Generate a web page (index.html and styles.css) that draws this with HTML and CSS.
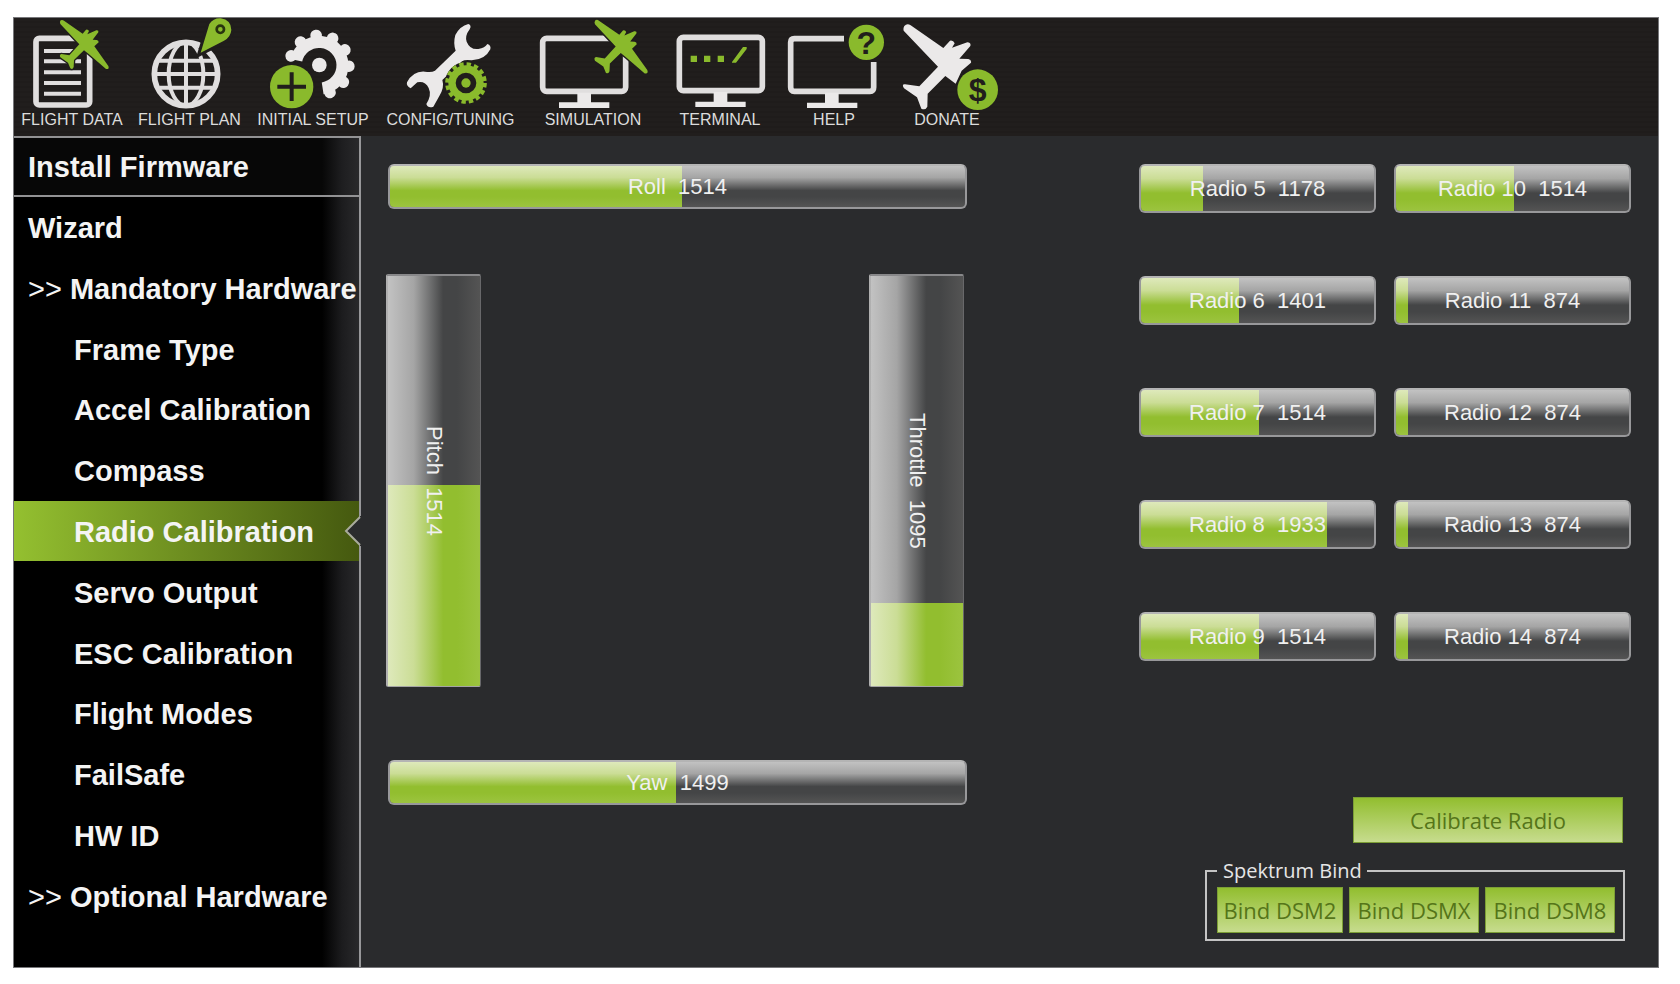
FILE: index.html
```html
<!DOCTYPE html>
<html lang="en">
<head>
<meta charset="utf-8">
<title>Radio Calibration</title>
<link rel="stylesheet" href="styles.css">
</head>
<body>
<svg class="defs" aria-hidden="true">
  <defs>
    <path id="plane" d="M0 0Q5-3 10 1L66 40 76 28Q82 26 85 32L80 42 107 30Q115 29 113 36L96 58 108 59Q114 60 114 66L101 78 143 137Q147 148 136 146L85 102 70 90 40 119 39 140Q36 149 29 144L22 127-1 111Q-5 103 2 101L26 105 56 72 -1 11Q-4 5 0 0Z"/>
  </defs>
</svg>
<div class="app">
  <header class="toolbar">
    <button class="tool tool-data" type="button">
      <svg viewBox="42 54 348 276" aria-hidden="true">
        <rect class="line" x="108" y="115" width="161" height="200" rx="10"/>
        <path class="line thin" d="M132 153H243M132 184H243M132 217H243M132 249H243M132 281H243"/>
        <use class="green trim" href="#plane" x="182" y="61"/>
        <use class="green" href="#plane" x="182" y="61"/>
      </svg>
      <span>FLIGHT DATA</span>
    </button>
    <button class="tool tool-plan" type="button">
      <svg viewBox="390 54 357 276" aria-hidden="true">
        <circle class="line" cx="558" cy="222" r="95"/>
        <g class="line thin"><path d="M558 125V319M462 222H654M477 182H640M480 263H636"/><ellipse cx="558" cy="222" rx="52" ry="95"/></g>
        <path class="green halo" d="M602 158L628 72Q640 54 662 55 694 60 694 90 692 112 672 122Z"/>
        <path class="green" d="M602 158L628 72Q640 54 662 55 694 60 694 90 692 112 672 122Z"/>
        <circle class="hole" cx="661" cy="88" r="11"/>
      </svg>
      <span>FLIGHT PLAN</span>
    </button>
    <button class="tool tool-setup" type="button">
      <svg viewBox="747 54 384 276" aria-hidden="true">
        <path class="gear" d="M889 181A70 70 0 1 1 968 265"/>
        <path class="teeth" d="M873 168A89 89 0 1 1 968 283"/>
        <circle class="white" cx="958" cy="195" r="22"/>
        <circle class="green halo" cx="875" cy="260" r="62"/>
        <circle class="green" cx="875" cy="260" r="65"/>
        <path class="cut" d="M832 260H918M875 217V303"/>
      </svg>
      <span>INITIAL SETUP</span>
    </button>
    <button class="tool tool-config" type="button">
      <svg viewBox="21 54 441 276" aria-hidden="true">
        <path class="white" d="M295 72Q306 76 299 88 284 108 290 125 300 150 325 147 345 144 352 132 364 136 361 148 345 180 305 181 285 178 276 184L217 240Q224 262 208 288L190 320Q174 326 169 312 186 285 176 264 165 242 142 247L122 265Q108 258 111 247 130 212 165 215 185 218 195 212L257 152Q249 130 256 105 270 78 295 72Z"/>
        <circle class="green halo" cx="288" cy="249" r="54"/>
        <circle class="small-gear" cx="288" cy="249" r="42"/>
        <circle class="small-teeth" cx="288" cy="249" r="56"/>
        <circle class="green" cx="288" cy="249" r="14"/>
      </svg>
      <span>CONFIG/TUNING</span>
    </button>
    <button class="tool tool-sim" type="button">
      <svg viewBox="462 54 414 276" aria-hidden="true">
        <rect class="line" x="518" y="115" width="249" height="159" rx="12"/>
        <path class="white" d="M622 278H663V307H718V324H567V307H622Z"/>
        <g transform="translate(676 61) scale(1.09)"><use class="green trim" href="#plane"/><use class="green" href="#plane"/></g>
      </svg>
      <span>SIMULATION</span>
    </button>
    <button class="tool tool-term" type="button">
      <svg viewBox="6 54 348 276" aria-hidden="true">
        <rect class="line" x="58" y="112" width="249" height="160" rx="12"/>
        <path class="white" d="M161 276H202V305H257V321H106V305H161Z"/>
        <path class="green" d="M92 167H111V186H92ZM132 167H151V186H132ZM173 167H192V186H173ZM216 186L249 141H260V147L228 188H216Z"/>
      </svg>
      <span>TERMINAL</span>
    </button>
    <button class="tool tool-help" type="button">
      <svg viewBox="354 54 336 276" aria-hidden="true">
        <path class="line" d="M552 116H403Q392 116 392 127V262Q392 274 403 274H630Q641 274 641 262V186"/>
        <path class="white" d="M495 278H536V308H592V324H441V308H495Z"/>
        <circle class="green" cx="619" cy="127" r="53"/>
        <text class="glyph" x="619" y="161">?</text>
      </svg>
      <span>HELP</span>
    </button>
    <button class="tool tool-donate" type="button">
      <svg viewBox="690 54 342 276" aria-hidden="true">
        <path class="white" d="M733 78Q741 69 752 76L850 144 870 122Q880 120 884 130L876 143 922 127Q934 128 931 138L898 176 925 177Q935 180 933 188L905 212 887 251 856 228 803 281 802 320Q796 332 784 326L771 292 732 265Q724 252 735 253L778 259 834 200 731 92Q729 84 733 78Z"/>
        <circle class="green halo" cx="953" cy="269" r="56"/>
        <circle class="green" cx="953" cy="269" r="61"/>
        <text class="glyph" x="953" y="303">$</text>
      </svg>
      <span>DONATE</span>
    </button>
  </header>
  <div class="body">
    <nav class="sidebar" aria-label="Setup">
      <a class="item first" href="#firmware">Install Firmware</a>
      <a class="item" href="#wizard">Wizard</a>
      <a class="item" href="#mandatory"><span class="marks">&gt;&gt;</span>Mandatory Hardware</a>
      <a class="item sub" href="#frame">Frame Type</a>
      <a class="item sub" href="#accel">Accel Calibration</a>
      <a class="item sub" href="#compass">Compass</a>
      <a class="item sub active" href="#radio" aria-current="page">Radio Calibration
        <svg class="notch" viewBox="0 0 18 30" aria-hidden="true"><path d="M18 0H16V1L2 15 16 29V30H18Z"/><polyline points="16,1 2,15 16,29"/></svg>
      </a>
      <a class="item sub" href="#servo">Servo Output</a>
      <a class="item sub" href="#esc">ESC Calibration</a>
      <a class="item sub" href="#modes">Flight Modes</a>
      <a class="item sub" href="#failsafe">FailSafe</a>
      <a class="item sub" href="#hwid">HW ID</a>
      <a class="item" href="#optional"><span class="marks">&gt;&gt;</span>Optional Hardware</a>
    </nav>
    <main class="content">
      <section class="sticks">
        <div class="bar wide"><div class="fill" style="width:50.8%"></div><span>Roll  1514</span></div>
        <div class="columns">
          <div class="bar tall"><div class="fill" style="height:49%"></div><span>Pitch  1514</span></div>
          <div class="bar tall"><div class="fill" style="height:20.2%"></div><span>Throttle  1095</span></div>
        </div>
        <div class="bar wide"><div class="fill" style="width:49.7%"></div><span>Yaw  1499</span></div>
      </section>
      <section class="side">
        <div class="radios">
          <div class="bar"><div class="fill" style="width:26.6%"></div><span>Radio 5  1178</span></div>
          <div class="bar"><div class="fill" style="width:42.1%"></div><span>Radio 6  1401</span></div>
          <div class="bar"><div class="fill" style="width:50.8%"></div><span>Radio 7  1514</span></div>
          <div class="bar"><div class="fill" style="width:80%"></div><span>Radio 8  1933</span></div>
          <div class="bar"><div class="fill" style="width:50.8%"></div><span>Radio 9  1514</span></div>
          <div class="bar"><div class="fill" style="width:50.8%"></div><span>Radio 10  1514</span></div>
          <div class="bar"><div class="fill" style="width:5%"></div><span>Radio 11  874</span></div>
          <div class="bar"><div class="fill" style="width:5%"></div><span>Radio 12  874</span></div>
          <div class="bar"><div class="fill" style="width:5%"></div><span>Radio 13  874</span></div>
          <div class="bar"><div class="fill" style="width:5%"></div><span>Radio 14  874</span></div>
        </div>
        <div class="actions">
          <button class="btn calibrate" type="button">Calibrate Radio</button>
          <fieldset class="bind">
            <legend>Spektrum Bind</legend>
            <div class="bind-row">
              <button class="btn" type="button">Bind DSM2</button>
              <button class="btn" type="button">Bind DSMX</button>
              <button class="btn" type="button">Bind DSM8</button>
            </div>
          </fieldset>
        </div>
      </section>
    </main>
  </div>
</div>
</body>
</html>
```
FILE: styles.css
```css
* { box-sizing: border-box; }

body {
  margin: 0;
  min-height: 100vh;
  display: flex;
  padding: 17px 21px 16px 13px;
  background: #fff;
  font-family: "Liberation Sans", Arial, sans-serif;
}

.defs { position: absolute; width: 0; height: 0; }

.app {
  flex: 1;
  display: flex;
  flex-direction: column;
  border: 1px solid #77777a;
  background: #2a2b2d;
}

/* Toolbar */
.toolbar {
  display: flex;
  padding-bottom: 6px;
  background: repeating-linear-gradient(#211e1d 0 3px, #1f1c1b 3px 5px);
}

.tool {
  display: flex;
  flex-direction: column;
  align-items: center;
  padding: 0;
  border: 0;
  background: none;
  color: #dcdcdc;
  font: 16px/20px "Liberation Sans", Arial, sans-serif;
  white-space: nowrap;
}
.tool svg { display: block; width: 100%; height: 92px; }
.tool-data, .tool-term { width: 116px; }
.tool-plan { width: 119px; }
.tool-setup { width: 128px; }
.tool-config { width: 147px; }
.tool-sim { width: 138px; }
.tool-help { width: 112px; }
.tool-donate { width: 114px; }

.line { fill: none; stroke: #e0dede; stroke-width: 17px; }
.thin { stroke-width: 12px; }
.white { fill: #ebe9e9; }
.green { fill: #8aba2c; }
.halo { stroke: #201d1c; stroke-width: 18px; }
.trim { stroke: #201d1c; stroke-width: 8px; }
.hole { fill: none; stroke: #28340f; stroke-width: 8px; }
.cut { fill: none; stroke: #211e1c; stroke-width: 12px; }
.gear { fill: none; stroke: #ebe9e9; stroke-width: 36px; }
.teeth { fill: none; stroke: #ebe9e9; stroke-width: 34px; stroke-linecap: round; stroke-dasharray: 1 50; }
.small-gear { fill: #211e1c; stroke: #8aba2c; stroke-width: 22px; }
.small-teeth { fill: none; stroke: #8aba2c; stroke-width: 13px; stroke-dasharray: 13 9; }
.glyph { fill: #211e1c; font: bold 96px "Liberation Sans", Arial, sans-serif; text-anchor: middle; }

/* Sidebar */
.body { flex: 1; display: flex; }

.sidebar {
  width: 347px;
  flex: none;
  display: grid;
  grid-auto-rows: 1fr;
  padding-bottom: 41px;
  border-right: 2px solid #98989a;
  background: linear-gradient(90deg, #000 308px, #1c1c1e 328px, #29292b 345px);
}

.item {
  position: relative;
  display: flex;
  align-items: center;
  padding: 2px 0 0 14px;
  color: #f4f4f4;
  font-size: 29px;
  line-height: 32px;
  font-weight: bold;
  text-decoration: none;
  white-space: nowrap;
}
.first {
  border-top: 2px solid #929294;
  border-bottom: 2px solid #929294;
  background: linear-gradient(90deg, #070707 308px, #1e1e20 328px, #29292b 345px);
}
.sub { padding-left: 60px; }
.marks { margin-right: 8px; font-weight: normal; }
.active { background: linear-gradient(90deg, #94c030, #45590f); }

.notch { position: absolute; right: -3px; top: calc(50% - 15px); width: 18px; height: 30px; }
.notch path { fill: #2a2b2d; }
.notch polyline { fill: none; stroke: #a9ab9c; stroke-width: 2px; }

/* Content */
.content {
  flex: 1;
  display: grid;
  grid-template-columns: 581fr 492fr;
  column-gap: 172px;
  padding: 28px 27px 26px 25px;
}

.sticks { display: flex; flex-direction: column; padding-bottom: 136px; }
.columns { flex: 1; display: flex; justify-content: space-between; margin: 65px 3px 73px 0; }

.bar {
  position: relative;
  height: 49px;
  display: flex;
  align-items: center;
  justify-content: center;
  overflow: hidden;
  border: 2px solid #98989a;
  border-top-color: #b4b4b4;
  border-radius: 6px;
  background: linear-gradient(#c2c2c2, #a5a5a5 28%, #444546 60%, #444546 75%, #545454);
}
.bar span {
  position: relative;
  color: #f0f0f0;
  font-size: 22px;
  line-height: 26px;
  white-space: pre;
}
.fill {
  position: absolute;
  left: 0;
  bottom: 0;
  height: 100%;
  background: linear-gradient(#dee9bb, #cbdd96 28%, #92be2f 60%, #92be2f 75%, #9cc43f);
}
.wide { height: 45px; margin-left: 2px; }
.tall {
  width: 95px;
  height: auto;
  min-height: 240px;
  border-width: 2px 1px 1px 2px;
  border-color: #88888a #68686a #a5a5a5 #b0b0b0;
  border-radius: 2px;
  background: linear-gradient(90deg, #c2c2c2, #a5a5a5 28%, #444546 60%, #444546 75%, #545454);
}
.tall span { writing-mode: vertical-rl; }
.tall .fill {
  width: 100%;
  background: linear-gradient(90deg, #dee9bb, #cbdd96 28%, #92be2f 60%, #92be2f 75%, #9cc43f);
}

.side { display: flex; flex-direction: column; justify-content: space-between; }
.radios {
  display: grid;
  grid-template-rows: repeat(5, 49px);
  grid-auto-flow: column;
  grid-auto-columns: 1fr;
  gap: 63px 18px;
}

.actions { display: flex; flex-direction: column; align-items: flex-end; gap: 14px; padding-right: 6px; }
.btn {
  height: 46px;
  width: 130px;
  padding: 0;
  border: 1px solid #7c9f35;
  background: linear-gradient(#92be2f, #c7dc8e);
  color: #557519;
  font: 22px/30px "Open Sans", "Noto Sans", sans-serif;
  white-space: nowrap;
}
.calibrate { width: 270px; margin-right: 2px; }

.bind {
  min-width: 0;
  margin: 0;
  padding: 2px 8px 6px 10px;
  border: 2px solid #c4c4c4;
}
.bind legend {
  padding: 0 5px 0 6px;
  color: #e6e6e6;
  font: 20px/28px "Open Sans", "Noto Sans", sans-serif;
}
.bind-row { display: flex; gap: 6px; }
.bind-row .btn:first-child { width: 126px; }
```
